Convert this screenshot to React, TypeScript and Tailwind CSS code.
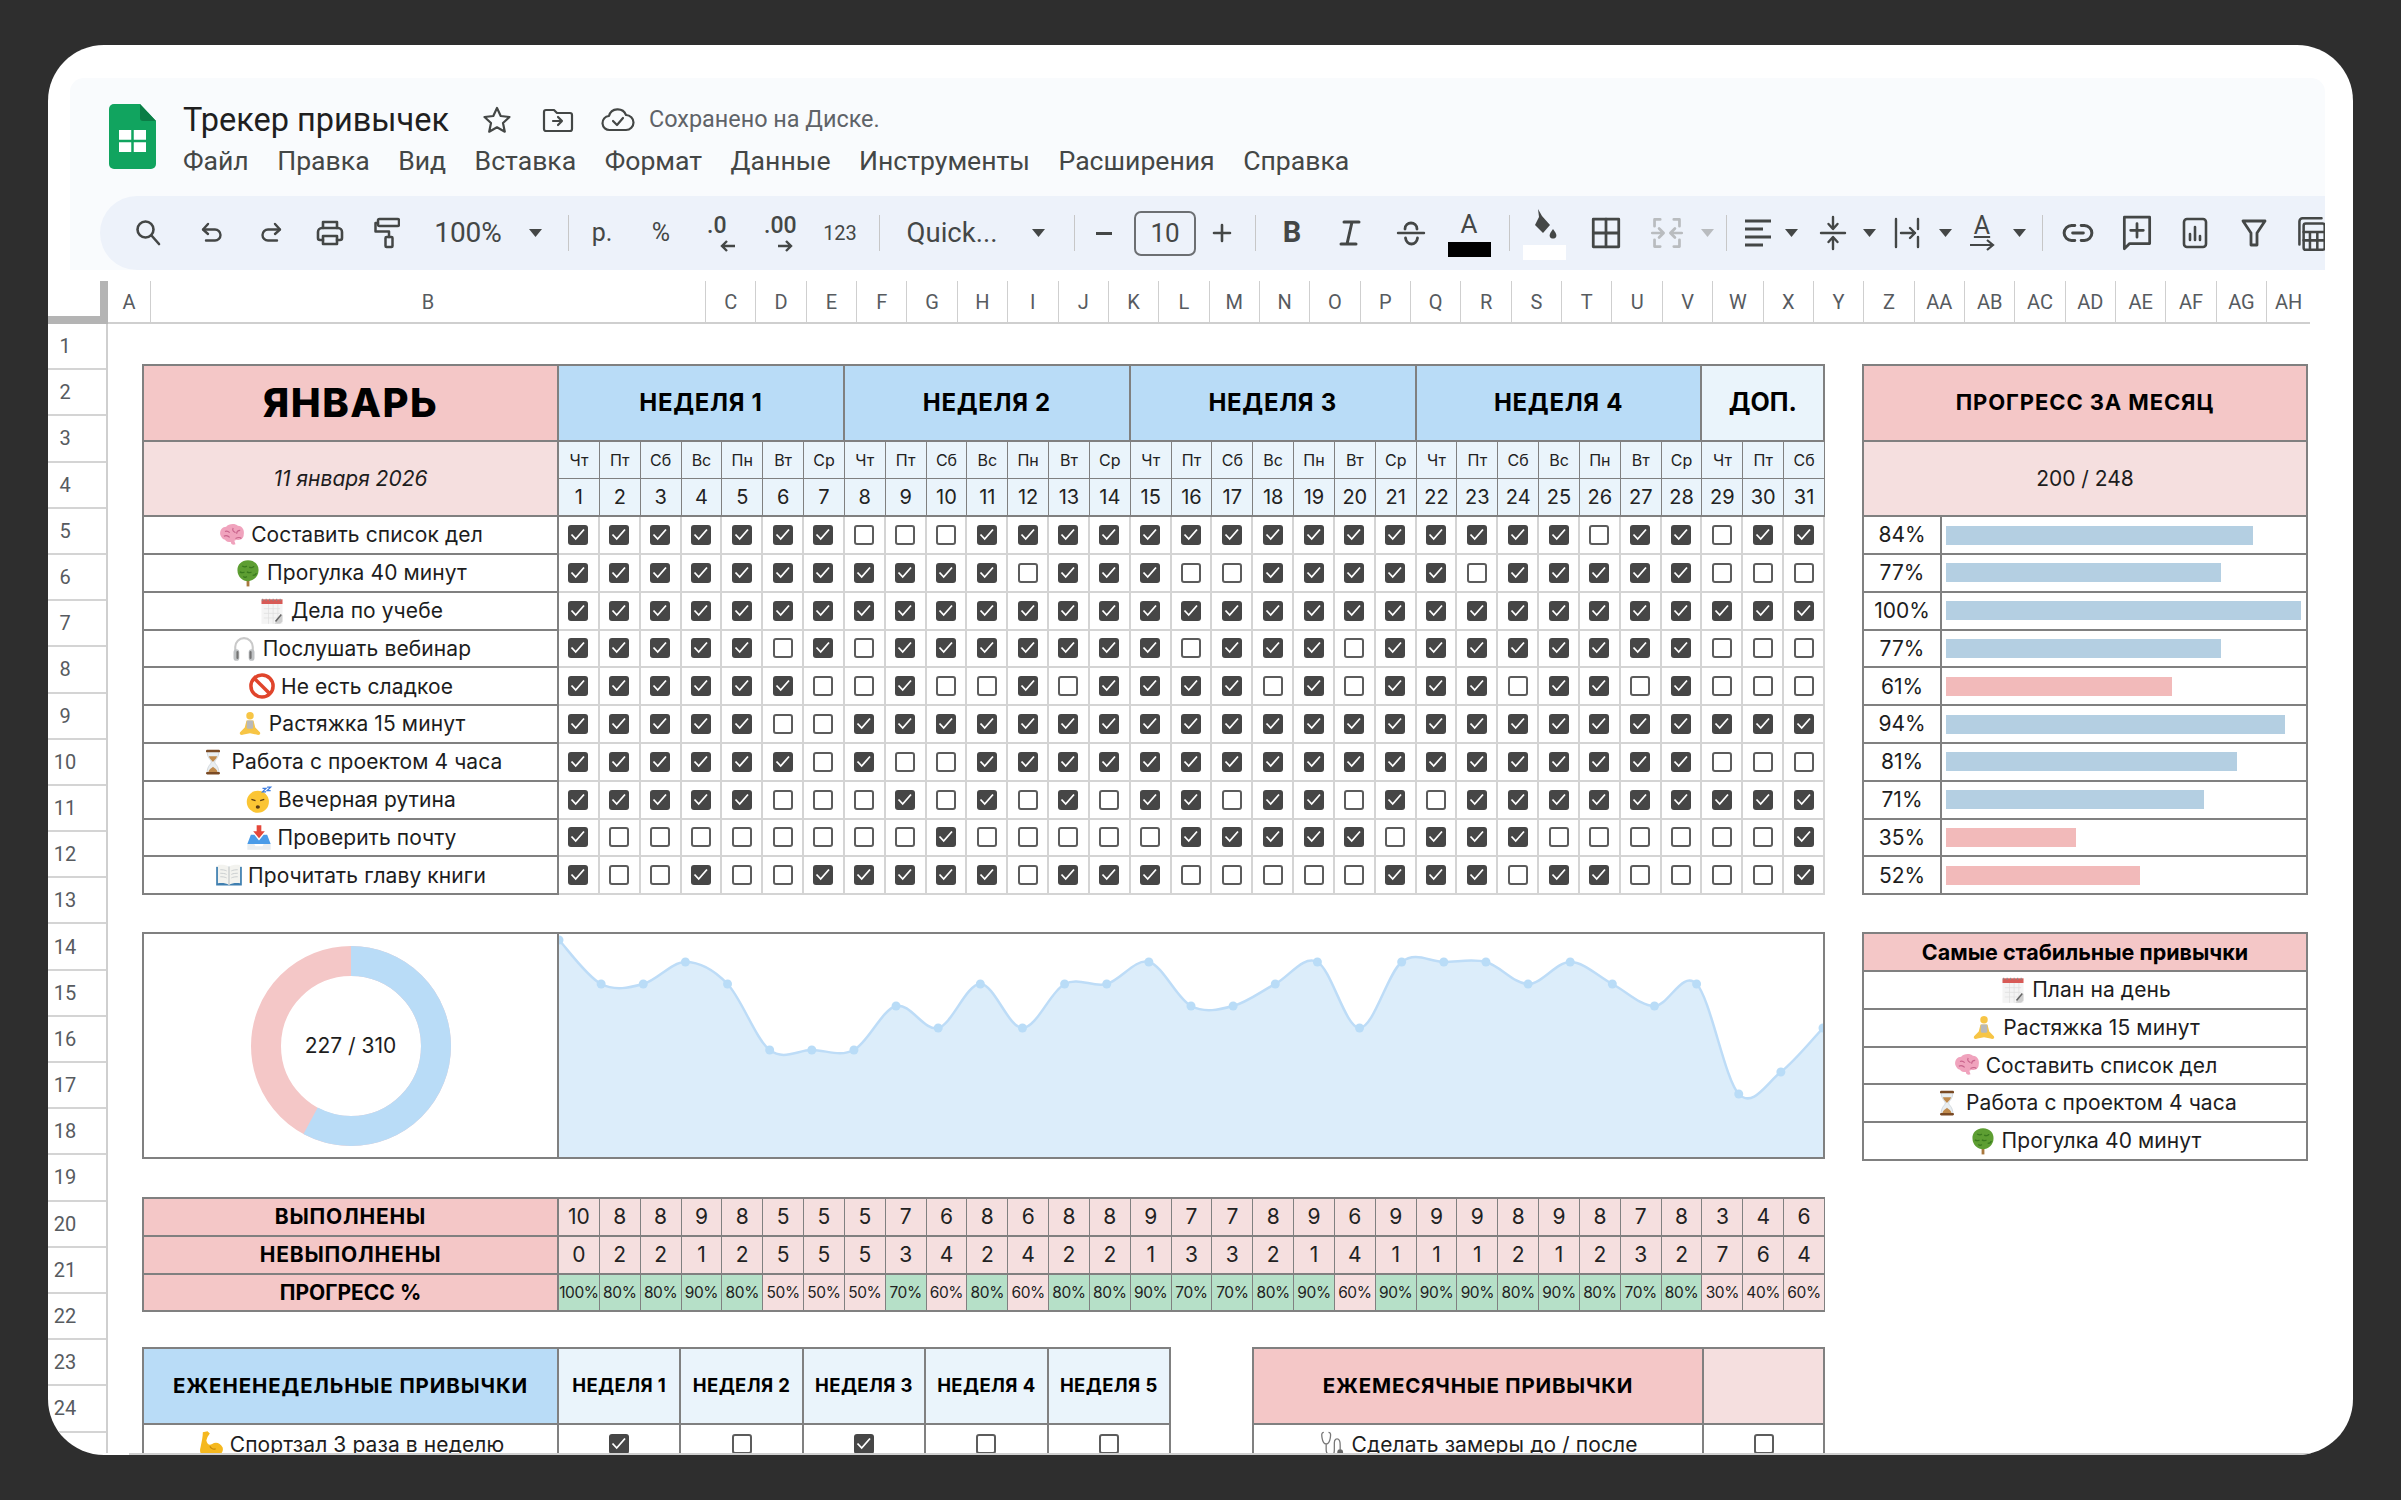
import React from "react";

const M = [
  "1111111000111111111111111011011",
  "1111111111101110011111011111000",
  "1111111111111111111111111111111",
  "1111101011111110111011111111000",
  "1111110010010111101011101101000",
  "1111100111111111111111111111111",
  "1111110100111111111111111111000",
  "1111100010101011011010111111111",
  "1000000001000001111101110000001",
  "1001001111101110000011101100001",
];
const DOW = ["Чт", "Пт", "Сб", "Вс", "Пн", "Вт", "Ср"];
const done = Array.from({ length: 31 }, (_, d) => M.reduce((s, r) => s + (r[d] === "1" ? 1 : 0), 0));

const Sv = ({ w = 26, h = 26, vb = "0 0 30 30", sw = 2.4, children, className = "" }: any) => (
  <svg width={w} height={h} viewBox={vb} fill="none" stroke="currentColor" strokeWidth={sw} strokeLinecap="round" strokeLinejoin="round" className={className}>
    {children}
  </svg>
);

/* ----- emoji drawings ----- */
const Emoji = ({ k }: { k: string }) => {
  const p = { width: 28, height: 28, viewBox: "0 0 24 24", className: "shrink-0" };
  switch (k) {
    case "brain":
      return (
        <svg {...p}>
          <path d="M2 12c-1-4 2-7 5-7 2-3 8-3 10-1 4 0 6 4 5 8 0 3-3 5-6 4l-2 1 1 3c-2 1-4 0-4-2-2 0-4 0-5-2-2 0-3-2-4-4z" fill="#f0a3bd" />
          <path d="M6 9c2-1 3 0 4 1m-5 3c2-1 4 0 5 1m3-8c-1 2 0 3 2 4m4-2c-2 0-3 1-3 3m-1 4c2-1 4-1 5 0" stroke="#c9648c" strokeWidth="1" fill="none" />
        </svg>
      );
    case "tree":
      return (
        <svg {...p}>
          <rect x="10.800" y="16" width="2.400" height="7.500" fill="#a9783f" />
          <path d="M12 1c6 0 9.500 4.500 9 9 0 5-4.500 9-9 9s-9-4-9-9C2.500 5.500 6 1 12 1z" fill="#5d9e32" />
          <path d="M7 6c2 1 3 1 4 0m2 1c2 1 4 0 4-1M5 11c2 1 3 1 4 0m2 0c2 1 3 1 4 0m1 3c2 0 3-1 3-2M8 15c1 1 2 1 3 0" stroke="#3a7a1e" strokeWidth="1.100" fill="none" />
        </svg>
      );
    case "note":
      return (
        <svg {...p}>
          <rect x="3" y="2" width="18" height="21" fill="#f4f4f4" />
          <rect x="3" y="2" width="18" height="4" fill="#d85a56" />
          <path d="M4 1.500v2M7 1.500v2M10 1.500v2M13 1.500v2M16 1.500v2M19 1.500v2" stroke="#888" strokeWidth=".8" />
          <path d="M5 10h14M5 14h14M5 18h14M9 6v17M13 6v17M17 6v17" stroke="#dedede" strokeWidth=".6" />
          <path d="M21 15l-7 8h5l2-2z" fill="#cfcfcf" />
          <path d="M20 15l-5 6" stroke="#666" strokeWidth="1.400" />
        </svg>
      );
    case "phones":
      return (
        <svg {...p}>
          <path d="M4.500 15V11a7.500 7.500 0 0 1 15 0v4" stroke="#c9c9c9" strokeWidth="1.800" fill="none" />
          <rect x="3" y="13" width="5" height="10" rx="2.500" fill="#bfc2c4" />
          <rect x="16" y="13" width="5" height="10" rx="2.500" fill="#bfc2c4" />
          <rect x="5.500" y="14.500" width="1.800" height="7" rx=".9" fill="#737373" />
          <rect x="16.700" y="14.500" width="1.800" height="7" rx=".9" fill="#737373" />
        </svg>
      );
    case "no":
      return (
        <svg {...p}>
          <circle cx="12" cy="12" r="9.500" fill="#fff" stroke="#e0452c" strokeWidth="3" />
          <path d="M5.500 5.500l13 13" stroke="#e0452c" strokeWidth="3" />
        </svg>
      );
    case "yoga":
      return (
        <svg {...p}>
          <circle cx="12" cy="5" r="3.200" fill="#f7c545" />
          <path d="M9 9h6l1.500 6 4 4c1 2-1 3-3 2l-5.500-1-5.500 1c-2 1-4 0-3-2l4-4z" fill="#f7c545" />
          <rect x="9.200" y="9" width="5.600" height="7" rx="1" fill="#b9b9b9" />
        </svg>
      );
    case "hour":
      return (
        <svg {...p}>
          <path d="M7 3h10c0 6-3.500 7-3.500 9s3.500 3 3.500 9H7c0-6 3.500-7 3.500-9S7 9 7 3z" fill="#e9eef1" stroke="#c5cdd2" strokeWidth=".6" />
          <path d="M8.500 7h7c-1 3-2.800 3.500-3.500 5-.7-1.500-2.500-2-3.500-5z" fill="#c08a4c" />
          <path d="M8 21c.5-3 3-4 4-5 1 1 3.500 2 4 5z" fill="#c08a4c" />
          <rect x="6" y="1.500" width="12" height="2.200" rx="1" fill="#7a4a24" />
          <rect x="6" y="20.500" width="12" height="2.200" rx="1" fill="#7a4a24" />
        </svg>
      );
    case "sleep":
      return (
        <svg {...p}>
          <circle cx="11" cy="13.500" r="9.500" fill="#fbc534" />
          <path d="M5.500 11.500l3.500 1M16.500 11.500l-3.500 1" stroke="#5b3b12" strokeWidth="1.200" />
          <ellipse cx="11" cy="18" rx="1.800" ry="1.500" fill="#5b3b12" />
          <path d="M15 2h3l-3 3h3M19 1h3l-3 3h3" stroke="#3e7de0" strokeWidth="1.100" fill="none" />
        </svg>
      );
    case "inbox":
      return (
        <svg {...p}>
          <path d="M10 2h4v5h3l-5 6-5-6h3z" fill="#e5483b" />
          <path d="M5 10h3l4 5 4-5h3l3 8H2z" fill="#4a9be8" />
          <path d="M2 18h6l1 2h6l1-2h6v5H2z" fill="#e9edf0" />
        </svg>
      );
    case "book":
      return (
        <svg {...p}>
          <path d="M1 5h22v16H1z" fill="#3f7fb0" />
          <path d="M2.500 3.500c4-.5 7 0 9.500 1.500 2.500-1.500 5.500-2 9.500-1.500V19c-4-.5-7 0-9.500 1.500C9.500 19 6.500 18.500 2.500 19z" fill="#f3f3ef" />
          <path d="M12 5v15.500" stroke="#b7bcc0" strokeWidth=".8" />
          <path d="M4.500 7.500c2 0 4 .2 5.500 1M4.500 10.500c2 0 4 .2 5.500 1M4.500 13.500c2 0 4 .2 5.500 1M14 8.500c1.500-.8 3.500-1 5.500-1M14 11.500c1.500-.8 3.500-1 5.500-1M14 14.500c1.500-.8 3.500-1 5.500-1" stroke="#c2c6c9" strokeWidth=".7" fill="none" />
        </svg>
      );
    case "muscle":
      return (
        <svg {...p}>
          <path d="M5 2l4-1 2 2-2 3-1 3c1 4 3 4 5 3 3-2 7-1 9 3 1 4-2 7-7 7H5c-2-1-3-4-2-7 1-5 2-9 2-13z" fill="#f5b81f" />
          <path d="M11 14c1 2 3 3 5 2" stroke="#c98a0a" strokeWidth="1" fill="none" />
        </svg>
      );
    default:
      return (
        <svg {...p}>
          <path d="M5 2C3 2 3 4 3.500 7c.5 3 1.500 5 3.500 5s3-2 3.500-5C11 4 11 2 9 2M7 12v5c0 3 2 5 4 5s3-2 3-5v-6c0-3 2-4 3.500-3s1.500 3 1.500 5v4" stroke="#777" strokeWidth="1.100" fill="none" />
          <circle cx="19" cy="19" r="2.500" fill="#666" />
        </svg>
      );
  }
};

const Check = ({ on }: { on: boolean }) =>
  on ? (
    <div className="w-5 h-5 rounded-[3px] bg-[#464646] flex items-center justify-center">
      <svg width="20" height="20" viewBox="0 0 20 20" fill="none" stroke="#fff" strokeWidth="1.800">
        <path d="M3.500 9.500l4.200 4.500L16 4.500" />
      </svg>
    </div>
  ) : (
    <div className="w-5 h-5 rounded-[3px] bg-white border-[2.5px] border-[#5c5c5c]" />
  );

const Caret = ({ c = "#444746" }: { c?: string }) => (
  <svg width="13" height="8" viewBox="0 0 13 8">
    <path d="M0 0h13L6.500 8z" fill={c} />
  </svg>
);
const Sep = () => <div className="w-px h-9 bg-[#c7c7c7]" />;
const Slot = ({ className = "", children }: any) => <div className={`h-full flex items-center justify-center shrink-0 ${className}`}>{children}</div>;

const Toolbar = () => (
  <div className="ml-[30px] h-[74px] bg-[#edf2fa] rounded-l-[37px] flex items-center overflow-hidden text-[#444746] font-['Roboto',sans-serif]">
    <Slot className="w-[96px]">
      <Sv w={30} h={30}><circle cx="12.500" cy="11.500" r="8" strokeWidth="2.600" /><path d="M18.500 17.500L26 26" strokeWidth="2.600" /></Sv>
    </Slot>
    <Slot className="w-[32px]">
      <Sv w={24} h={24} vb="0 0 24 24"><path d="M8 3L3 8.500 8 13" /><path d="M3.500 8.500H15a5.500 5.500 0 0 1 0 11H6" /></Sv>
    </Slot>
    <Slot className="w-[86px]">
      <Sv w={24} h={24} vb="0 0 24 24"><path d="M16 3l5 5.500L16 13" /><path d="M20.500 8.500H9a5.500 5.500 0 0 0 0 11h9" /></Sv>
    </Slot>
    <Slot className="w-[32px]">
      <Sv w={32} h={30} sw={2.600}><path d="M8 10V4h14v6" /><path d="M8 22H5a2 2 0 0 1-2-2v-6a4 4 0 0 1 4-4h16a4 4 0 0 1 4 4v6a2 2 0 0 1-2 2h-3" /><rect x="8" y="18" width="14" height="8" /></Sv>
    </Slot>
    <Slot className="w-[82px]">
      <Sv w={26} h={32} vb="0 0 26 32" sw={2.500}><rect x="4" y="2" width="21" height="7" rx="1.500" /><path d="M4 6H1.500v8.500H15V20" /><rect x="11.500" y="20" width="7" height="10" rx="1" /></Sv>
    </Slot>
    <Slot className="w-[80px] text-[28px]">100%</Slot>
    <Slot className="w-[54px]"><Caret /></Slot>
    <Slot className="w-[12px]"><Sep /></Slot>
    <Slot className="w-[56px] text-[25px]">р.</Slot>
    <Slot className="w-[62px] text-[25px]">%</Slot>
    <Slot className="w-[60px]">
      <div className="relative w-[30px] h-[40px] text-[23px] leading-[26px] font-medium">
        .0
        <svg width="18" height="14" viewBox="0 0 18 14" className="absolute left-[12px] top-[26px]" fill="none" stroke="currentColor" strokeWidth="2.400"><path d="M16 7H3M8 2L3 7l5 5" /></svg>
      </div>
    </Slot>
    <Slot className="w-[58px]">
      <div className="relative w-[34px] h-[40px] text-[23px] leading-[26px] font-medium">
        .00
        <svg width="18" height="14" viewBox="0 0 18 14" className="absolute left-[12px] top-[26px]" fill="none" stroke="currentColor" strokeWidth="2.400"><path d="M2 7h13M10 2l5 5-5 5" /></svg>
      </div>
    </Slot>
    <Slot className="w-[60px] text-[20px]">123</Slot>
    <Slot className="w-[18px]"><Sep /></Slot>
    <Slot className="w-[128px] text-[27.500px]">Quick...</Slot>
    <Slot className="w-[44px]"><Caret /></Slot>
    <Slot className="w-[28px]"><Sep /></Slot>
    <Slot className="w-[32px]"><div className="w-[16px] h-[3px] bg-[#444746]" /></Slot>
    <Slot className="w-[90px]">
      <div className="w-[62px] h-[45px] rounded-[7px] border-2 border-[#6c6f72] flex items-center justify-center text-[26px]">10</div>
    </Slot>
    <Slot className="w-[24px]">
      <Sv w={22} h={22} vb="0 0 22 22" sw={2.600}><path d="M11 3v16M3 11h16" /></Sv>
    </Slot>
    <Slot className="w-[42px]"><Sep /></Slot>
    <Slot className="w-[32px] text-[29px] font-bold">B</Slot>
    <Slot className="w-[84px]">
      <Sv w={24} h={28} vb="0 0 24 28" sw={3}><path d="M6 3h15M3 25h15M14 3L9 25" /></Sv>
    </Slot>
    <Slot className="w-[38px]">
      <Sv w={30} h={30}><path d="M2 15h26" /><path d="M9 11c0-8 12-8 12 0M9.500 20c1 8 11 8 12 0" strokeWidth="2.800" /></Sv>
    </Slot>
    <Slot className="w-[78px]">
      <div className="flex flex-col items-center">
        <span className="text-[26px] leading-[30px] mb-[3px]">A</span>
        <div className="w-[43px] h-[15px] bg-black" />
      </div>
    </Slot>
    <Slot className="w-[2px]"><Sep /></Slot>
    <Slot className="w-[68px]">
      <div className="flex flex-col items-center">
        <svg width="36" height="36" viewBox="0 0 36 36">
          <path d="M12 2l4 7 8 9-7 8-8-8 4-8z" fill="#444746" />
          <path d="M27 22c3 4 4 6 3 8-1 2-5 2-6 0-1-2 0-4 3-8z" fill="#444746" />
        </svg>
        <div className="w-[43px] h-[15px] bg-white mt-[2px]" />
      </div>
    </Slot>
    <Slot className="w-[56px]">
      <Sv w={32} h={34} vb="0 0 30 32" sw={2.600}><rect x="3" y="3" width="24" height="26" /><path d="M15 3v26M3 16h24" /></Sv>
    </Slot>
    <Slot className="w-[66px] text-[#b9bcbf]">
      <Sv w={34} h={34} sw={2.400}><path d="M9 3H4v6M21 3h5v6M9 27H4v-6M21 27h5v-6" /><path d="M2 15h9M8 11l4 4-4 4M28 15h-9M22 11l-4 4 4 4" /></Sv>
    </Slot>
    <Slot className="w-[14px]"><Caret c="#b9bcbf" /></Slot>
    <Slot className="w-[24px]"><Sep /></Slot>
    <Slot className="w-[40px]">
      <Sv w={30} h={34} vb="0 0 30 30" sw={3}><path d="M2 3h26M2 11h18M2 19h26M2 27h18" strokeLinecap="butt" /></Sv>
    </Slot>
    <Slot className="w-[26px]"><Caret /></Slot>
    <Slot className="w-[58px]">
      <Sv w={28} h={36} vb="0 0 28 36"><path d="M2 18h24" /><path d="M14 2v11M9.500 9l4.500 5 4.500-5M14 34V23M9.500 27l4.500-5 4.500 5" /></Sv>
    </Slot>
    <Slot className="w-[14px]"><Caret /></Slot>
    <Slot className="w-[62px]">
      <Sv w={28} h={34} vb="0 0 28 34"><path d="M3 3v28M25 3v10M25 21v10M8 17h14M17 12l5 5-5 5" /></Sv>
    </Slot>
    <Slot className="w-[14px]"><Caret /></Slot>
    <Slot className="w-[60px]">
      <div className="flex flex-col items-center leading-none">
        <span className="text-[25px] leading-[24px] underline underline-offset-2">A</span>
        <svg width="26" height="14" viewBox="0 0 26 14" fill="none" stroke="currentColor" strokeWidth="2.200"><path d="M1 7h23M18 2l6 5-6 5" /></svg>
      </div>
    </Slot>
    <Slot className="w-[14px]"><Caret /></Slot>
    <Slot className="w-[32px]"><Sep /></Slot>
    <Slot className="w-[40px]">
      <Sv w={32} h={32}><path d="M12 8H9a7 7 0 0 0 0 14h3M18 8h3a7 7 0 0 1 0 14h-3M10 15h10" strokeWidth="2.800" /></Sv>
    </Slot>
    <Slot className="w-[78px]">
      <Sv w={32} h={38} vb="0 0 30 36" sw={2.600}><path d="M3 3h24v25H8l-5 5z" /><path d="M15 9v13M9 15.500h12" /></Sv>
    </Slot>
    <Slot className="w-[38px]">
      <Sv w={28} h={34} vb="0 0 28 34" sw={2.600}><rect x="3" y="3" width="22" height="28" rx="3" /><path d="M9 24v-6M14 24V11M19 24v-4" /></Sv>
    </Slot>
    <Slot className="w-[80px]">
      <Sv w={28} h={32} vb="0 0 28 32" sw={2.800}><path d="M3 4h22l-8 12v12h-6V16z" /></Sv>
    </Slot>
    <Slot className="w-[34px]">
      <Sv w={32} h={40} vb="0 0 30 38" sw={2.400}><path d="M4 30V8a3 3 0 0 1 3-3h18" /><rect x="8" y="10" width="20" height="25" rx="2" /><path d="M8 18h20M14 18v17M21 18v17M8 26h20" /></Sv>
    </Slot>
  </div>
);

const Logo = () => (
  <svg width="47" height="65" viewBox="0 0 47 65" className="shrink-0">
    <path d="M5 0h26l16 17v43a5 5 0 0 1-5 5H5a5 5 0 0 1-5-5V5a5 5 0 0 1 5-5z" fill="#11a45f" />
    <path d="M31 0l16 17H34a3 3 0 0 1-3-3z" fill="#0b7d46" />
    <path d="M10 26h27v22H10z" fill="#fff" />
    <path d="M23.500 26v22M10 37h27" stroke="#11a45f" strokeWidth="2.500" />
  </svg>
);

const Header = () => (
  <div className="ml-[22px] mr-[28px] mt-[33px] bg-[#f9fbfd] rounded-t-[14px] shrink-0">
    <div className="h-[118px] flex font-['Roboto',sans-serif]">
      <div className="ml-[39px] mt-[26px] mr-[27px]"><Logo /></div>
      <div className="flex flex-col">
        <div className="flex items-center h-[38px] mt-[23px]">
          <span className="text-[32.500px] text-[#1f1f1f] w-[299px] leading-none whitespace-nowrap">Трекер привычек</span>
          <div className="w-[60px] text-[#444746]">
            <Sv w={30} h={30} vb="0 0 30 30" sw={2.200}><path d="M15 3l3.700 8 8.800 1-6.500 6 1.800 8.700L15 22.300 7.200 26.700 9 18l-6.500-6 8.800-1z" /></Sv>
          </div>
          <div className="w-[59px] text-[#444746]">
            <Sv w={32} h={28} vb="0 0 32 28" sw={2.200}><path d="M2 6a2 2 0 0 1 2-2h8l3 3h13a2 2 0 0 1 2 2v14a2 2 0 0 1-2 2H4a2 2 0 0 1-2-2z" /><path d="M11 15h9M16 11l4 4-4 4" /></Sv>
          </div>
          <div className="w-[48px] text-[#444746]">
            <Sv w={34} h={26} vb="0 0 34 26" sw={2.200}><path d="M9 23a7 7 0 0 1-1-14 9 9 0 0 1 17-1 7.500 7.500 0 0 1 0 15z" /><path d="M12 14l4 4 6-7" /></Sv>
          </div>
          <span className="text-[23.400px] text-[#5f6368] whitespace-nowrap">Сохранено на Диске.</span>
        </div>
        <div className="flex gap-[28.500px] text-[26.600px] text-[#444746] leading-none mt-[9px] whitespace-nowrap">
          {["Файл", "Правка", "Вид", "Вставка", "Формат", "Данные", "Инструменты", "Расширения", "Справка"].map((m) => (
            <span key={m}>{m}</span>
          ))}
        </div>
      </div>
    </div>
    <Toolbar />
  </div>
);

const cols = ["C","D","E","F","G","H","I","J","K","L","M","N","O","P","Q","R","S","T","U","V","W","X","Y","Z","AA","AB","AC","AD","AE","AF","AG","AH"];

const ColHeader = () => (
  <div className="flex h-[43px] mt-[11px] text-[20px] text-[#575b5f] font-['Roboto',sans-serif] shrink-0">
    <div className="w-[60px] shrink-0 border-b-[8px] border-r-[8px] border-[#b4b4b4]" />
    <div className="w-[43px] shrink-0 flex items-center justify-center border-r border-b-2 border-[#cfcfcf]">A</div>
    <div className="w-[555px] shrink-0 flex items-center justify-center border-r border-b-2 border-[#cfcfcf]">B</div>
    <div className="w-[1604px] grid grid-cols-[repeat(31,50.36px)_1fr]">
      {cols.map((c) => (
        <div key={c} className="flex items-center justify-center border-r border-b-2 border-[#cfcfcf] last:border-r-0">{c}</div>
      ))}
    </div>
  </div>
);

const RowGutter = () => (
  <div className="w-[60px] shrink-0 border-r-2 border-[#cfcfcf] font-['Roboto',sans-serif] text-[20px] text-[#575b5f]">
    {Array.from({ length: 25 }, (_, i) => (
      <div key={i} className="h-[46.2px] border-b-2 border-[#d4d4d4] flex items-center pl-[4px] w-full">
        <span className="w-[26px] text-center">{i < 24 ? i + 1 : ""}</span>
      </div>
    ))}
  </div>
);

const habits: [string, string][] = [
  ["brain", "Составить список дел"],
  ["tree", "Прогулка 40 минут"],
  ["note", "Дела по учебе"],
  ["phones", "Послушать вебинар"],
  ["no", "Не есть сладкое"],
  ["yoga", "Растяжка 15 минут"],
  ["hour", "Работа с проектом 4 часа"],
  ["sleep", "Вечерная рутина"],
  ["inbox", "Проверить почту"],
  ["book", "Прочитать главу книги"],
];
const HabitLabel = ({ k, t }: { k: string; t: string }) => (
  <span className="flex items-center justify-center gap-[5px] text-[21px] tracking-[0.1px] text-[#1d1d1d] whitespace-nowrap">
    <Emoji k={k} />
    {t}
  </span>
);

const B = "border-r-2 border-b-2 border-[#808080]";
const C = "flex items-center justify-center";

const MainTable = () => (
  <div className="w-[1683px] shrink-0 grid grid-cols-[415px_repeat(31,1fr)] auto-rows-[37.8px] border-t-2 border-l-2 border-[#808080]">
    <div className={`${B} ${C} col-start-1 row-span-2 h-[75.6px] bg-[#f4c7c7] text-[40px] font-extrabold text-black tracking-[1.5px]`}>ЯНВАРЬ</div>
    {[1, 2, 3, 4].map((w) => (
      <div key={w} className={`col-span-7 row-span-2 ${C} bg-[#b9dcf7] border-b-2 border-r-2 border-[#808080] text-[24px] font-bold text-black tracking-[0.7px]`}>НЕДЕЛЯ {w}</div>
    ))}
    <div className={`col-span-3 row-span-2 ${C} bg-[#eaf4fb] ${B} text-[25px] font-bold text-black`}>ДОП.</div>

    <div className={`${B} ${C} col-start-1 row-span-2 bg-[#f5dfdf] text-[21px] italic text-[#1d1d1d]`}>11 января 2026</div>
    {Array.from({ length: 31 }, (_, d) => (
      <div key={d} className={`${C} bg-[#eaf4fb] border-r border-b border-[#808080] text-[16px] text-[#222]`}>{DOW[d % 7]}</div>
    ))}
    {Array.from({ length: 31 }, (_, d) => (
      <div key={d} className={`${C} bg-[#eaf4fb] border-r border-b-2 border-[#808080] text-[20px] text-[#222]`}>{d + 1}</div>
    ))}

    {habits.map(([k, t], r) => (
      <React.Fragment key={t}>
        <div className={`${B} ${C} col-start-1`}><HabitLabel k={k} t={t} /></div>
        {M[r].split("").map((v, d) => (
          <div key={d} className={`${C} border-r-2 border-b-2 border-[#d4d4d4]`}><Check on={v === "1"} /></div>
        ))}
      </React.Fragment>
    ))}
  </div>
);

const bars: [string, number, boolean][] = [
  ["84%", 307, true], ["77%", 275, true], ["100%", 355, true], ["77%", 275, true], ["61%", 226, false],
  ["94%", 339, true], ["81%", 291, true], ["71%", 258, true], ["35%", 130, false], ["52%", 194, false],
];

const ProgressTable = () => (
  <div className="w-[446px] shrink-0 border-t-2 border-l-2 border-[#808080]">
    <div className={`h-[75.6px] ${C} ${B} bg-[#f4c7c7] text-[22px] font-bold text-black tracking-[0.9px]`}>ПРОГРЕСС ЗА МЕСЯЦ</div>
    <div className={`h-[75.6px] ${C} ${B} bg-[#f5dfdf] text-[21px] text-[#1d1d1d]`}>200 / 248</div>
    {bars.map(([t, w, blue], i) => (
      <div key={i} className={`h-[37.8px] flex ${B}`}>
        <div className={`w-[78px] shrink-0 ${C} border-r-2 border-[#808080] text-[21px] text-[#1d1d1d]`}>{t}</div>
        <div className="flex-1 flex items-center pl-[4px]">
          <div className={`h-[19px] ${blue ? "bg-[#b4cfe2]" : "bg-[#f2baba]"}`} style={{ width: w }} />
        </div>
      </div>
    ))}
  </div>
);

const Donut = () => {
  const r = 85;
  const c = 2 * Math.PI * r;
  return (
    <div className="grid place-items-center">
      <svg width="200" height="200" viewBox="0 0 200 200" className="[grid-area:1/1] -rotate-90">
        <circle cx="100" cy="100" r={r} fill="none" stroke="#f4c7c7" strokeWidth="30" />
        <circle cx="100" cy="100" r={r} fill="none" stroke="#b9dcf7" strokeWidth="30" strokeDasharray={`${c * 0.578} ${c}`} />
      </svg>
      <span className="[grid-area:1/1] text-[21px] text-[#1d1d1d]">227 / 310</span>
    </div>
  );
};

const LineChart = () => {
  const px = (i: number) => i * 42.2;
  const py = (v: number) => 6 + (10 - v) * 22;
  const pts = done.map((v, i) => [px(i), py(v)]);
  let d = `M${pts[0][0]} ${pts[0][1]}`;
  for (let i = 0; i < pts.length - 1; i++) {
    const p0 = pts[Math.max(0, i - 1)], p1 = pts[i], p2 = pts[i + 1], p3 = pts[Math.min(pts.length - 1, i + 2)];
    d += ` C${p1[0] + (p2[0] - p0[0]) / 6} ${p1[1] + (p2[1] - p0[1]) / 6} ${p2[0] - (p3[0] - p1[0]) / 6} ${p2[1] - (p3[1] - p1[1]) / 6} ${p2[0]} ${p2[1]}`;
  }
  const last = pts[pts.length - 1][0];
  return (
    <svg width="100%" height="100%" viewBox="0 0 1266 223" preserveAspectRatio="none" className="block">
      <path d={`${d} L${last} 223 L0 223 Z`} fill="#dcedfa" />
      <path d={d} fill="none" stroke="#bddcf7" strokeWidth="2.500" />
      {pts.map((p, i) => <circle key={i} cx={p[0]} cy={p[1]} r="4.500" fill="#b9dcf7" />)}
    </svg>
  );
};

const ChartRow = () => (
  <div className="flex gap-[37px] mt-[37px]">
    <div className="w-[1683px] shrink-0 h-[227px] grid grid-cols-[415px_1fr] border-2 border-[#808080]">
      <div className={`${C} border-r-2 border-[#808080]`}><Donut /></div>
      <div className="min-w-0 overflow-hidden"><LineChart /></div>
    </div>
    <div className="w-[446px] shrink-0 border-t-2 border-l-2 border-[#808080]">
      <div className={`h-[37.8px] ${C} ${B} bg-[#f4c7c7] text-[21.500px] font-bold text-black whitespace-nowrap`}>Самые стабильные привычки</div>
      {[["note", "План на день"], ["yoga", "Растяжка 15 минут"], ["brain", "Составить список дел"], ["hour", "Работа с проектом 4 часа"], ["tree", "Прогулка 40 минут"]].map(([k, t]) => (
        <div key={t} className={`h-[37.8px] ${C} ${B}`}><HabitLabel k={k} t={t} /></div>
      ))}
    </div>
  </div>
);

const StatsTable = () => (
  <div className="w-[1683px] mt-[36px] grid grid-cols-[415px_repeat(31,1fr)] auto-rows-[37.8px] border-t-2 border-l-2 border-[#808080]">
    <div className={`${B} ${C} col-start-1 bg-[#f4c7c7] text-[21px] font-bold text-black tracking-[0.8px]`}>ВЫПОЛНЕНЫ</div>
    {done.map((v, i) => <div key={i} className={`${C} bg-[#f5dfdf] border-r border-b-2 border-[#808080] text-[21px] text-[#222]`}>{v}</div>)}
    <div className={`${B} ${C} col-start-1 bg-[#f4c7c7] text-[21px] font-bold text-black tracking-[0.8px]`}>НЕВЫПОЛНЕНЫ</div>
    {done.map((v, i) => <div key={i} className={`${C} bg-[#f5dfdf] border-r border-b-2 border-[#808080] text-[21px] text-[#222]`}>{10 - v}</div>)}
    <div className={`${B} ${C} col-start-1 bg-[#f4c7c7] text-[21px] font-bold text-black`}>ПРОГРЕСС %</div>
    {done.map((v, i) => (
      <div key={i} className={`${C} ${v >= 7 ? "bg-[#b6e0c8]" : "bg-[#f5dfdf]"} border-r border-b-2 border-[#808080] text-[15.500px] tracking-[-0.4px] text-[#222]`}>{v * 10}%</div>
    ))}
  </div>
);

const LowerTables = () => (
  <div className="flex mt-[35px]">
    <div className="w-[1029px] shrink-0 grid grid-cols-[415px_repeat(5,1fr)] grid-rows-[76px_38px] border-t-2 border-l-2 border-[#808080]">
      <div className={`${B} ${C} bg-[#b9dcf7] text-[20.500px] font-bold text-black whitespace-nowrap tracking-[0.9px]`}>ЕЖЕНЕНЕДЕЛЬНЫЕ ПРИВЫЧКИ</div>
      {[1, 2, 3, 4, 5].map((w) => (
        <div key={w} className={`${B} ${C} bg-[#eaf4fb] text-[18.500px] font-bold text-black tracking-[0.4px]`}>НЕДЕЛЯ {w}</div>
      ))}
      <div className={`${C} border-r-2 border-[#808080]`}><HabitLabel k="muscle" t="Спортзал 3 раза в неделю" /></div>
      {[true, false, true, false, false].map((on, i) => (
        <div key={i} className={`${C} border-r-2 border-[#808080]`}><Check on={on} /></div>
      ))}
    </div>
    <div className="w-[573px] shrink-0 ml-[81px] grid grid-cols-[450px_1fr] grid-rows-[76px_38px] border-t-2 border-l-2 border-[#808080]">
      <div className={`${B} ${C} bg-[#f4c7c7] text-[20.500px] font-bold text-black tracking-[0.8px]`}>ЕЖЕМЕСЯЧНЫЕ ПРИВЫЧКИ</div>
      <div className={`${B} bg-[#f5dfdf]`} />
      <div className={`${C} border-r-2 border-[#808080]`}><HabitLabel k="steth" t="Сделать замеры до / после" /></div>
      <div className={`${C} border-r-2 border-[#808080]`}><Check on={false} /></div>
    </div>
  </div>
);

export default function App() {
  return (
    <div className="w-[2401px] h-[1500px] bg-[#2e2e2e] pt-[45px] pl-[48px] font-['Inter',sans-serif] overflow-hidden">
      <div className="w-[2305px] h-[1410px] bg-white rounded-[56px] overflow-hidden flex flex-col">
        <Header />
        <ColHeader />
        <div className="flex flex-1 min-h-0 overflow-hidden">
          <RowGutter />
          <div className="pl-[34px] pt-[40px] flex-1 min-w-0">
            <div className="flex gap-[37px]">
              <MainTable />
              <ProgressTable />
            </div>
            <ChartRow />
            <StatsTable />
            <LowerTables />
          </div>
        </div>
        <div className="h-[2px] ml-[81px] bg-[#cfcfcf] shrink-0" />
      </div>
    </div>
  );
}
